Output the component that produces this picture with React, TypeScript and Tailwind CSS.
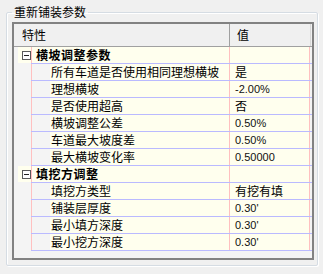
import React from "react";

type Row =
  | { kind: "group"; label: string }
  | { kind: "item"; label: string; value: string; latin?: boolean };

const rows: Row[] = [
  { kind: "group", label: "横坡调整参数" },
  { kind: "item", label: "所有车道是否使用相同理想横坡", value: "是" },
  { kind: "item", label: "理想横坡", value: "-2.00%", latin: true },
  { kind: "item", label: "是否使用超高", value: "否" },
  { kind: "item", label: "横坡调整公差", value: "0.50%", latin: true },
  { kind: "item", label: "车道最大坡度差", value: "0.50%", latin: true },
  { kind: "item", label: "最大横坡变化率", value: "0.50000", latin: true },
  { kind: "group", label: "填挖方调整" },
  { kind: "item", label: "填挖方类型", value: "有挖有填" },
  { kind: "item", label: "铺装层厚度", value: "0.30'", latin: true },
  { kind: "item", label: "最小填方深度", value: "0.30'", latin: true },
  { kind: "item", label: "最小挖方深度", value: "0.30'", latin: true },
];

const cjk = "font-['Noto_Sans_CJK_SC',sans-serif]";

function MinusBox() {
  return (
    <div className="w-[9px] h-[9px] border border-[#5a5a5a] bg-white flex items-center justify-center">
      <div className="w-[5px] h-px bg-[#222]" />
    </div>
  );
}

function GridRow({ row }: { row: Row }) {
  const isGroup = row.kind === "group";
  return (
    <div className="flex h-[17px]">
      <div className="w-[17px] h-[16px] flex">
        {isGroup && (
          <div className="ml-[4px] w-[13px] bg-[#ffffee] flex items-center pl-[4px]">
            <MinusBox />
          </div>
        )}
      </div>
      <div className="flex-1 flex border-b border-[#babaff]">
        <div className="w-px bg-[#ffc0c0]" />
        {isGroup ? (
          <div className="w-[197px] bg-[#ffffee] flex items-center pl-[4px]">
            <span className={`${cjk} text-[12px] leading-none font-bold text-black tracking-[0.5px]`}>
              {row.label}
            </span>
          </div>
        ) : (
          <>
            <div className="w-[18px]" />
            <div className="w-[179px] bg-[#ffffee] flex items-center pl-[1px]">
              <span className={`${cjk} text-[12px] leading-none text-black whitespace-nowrap`}>
                {row.label}
              </span>
            </div>
          </>
        )}
        <div className="w-px bg-[#ffc0c0]" />
        <div className="w-[79px] bg-[#ffffee] flex items-center pl-[5px]">
          {row.kind === "item" && (
            <span
              className={
                row.latin
                  ? "font-['Liberation_Sans',sans-serif] text-[11px] leading-none text-[#111]"
                  : `${cjk} text-[12px] leading-none text-black`
              }
            >
              {row.value}
            </span>
          )}
        </div>
        <div className="w-px bg-[#ffc0c0]" />
      </div>
    </div>
  );
}

export default function App() {
  return (
    <div className="w-[323px] h-[274px] bg-[#f0f0f0] pt-[4px] pl-[6px] overflow-hidden">
      <fieldset className="w-[312px] h-[262px] border border-[#d5dce3] shadow-[inset_1px_1px_0_#fff,1px_1px_0_#fff] rounded-[2px]">
        <legend className={`${cjk} ml-[5px] px-[2px] text-[12px] leading-[16px] text-black`}>
          重新铺装参数
        </legend>
        <div className="ml-[5px] mt-[2px] w-[302px] h-[238px] border-2 border-[#828282] bg-[#f4f4f4] flex flex-col">
          <div className="flex h-[23px] bg-[#f0f0f0] border-b border-[#a0a0a0]">
            <div className="w-[215px] flex items-center pl-[8px]">
              <span className={`${cjk} text-[12px] leading-none text-black`}>特性</span>
            </div>
            <div className="w-px bg-[#a0a0a0]" />
            <div className="w-[80px] flex items-center pl-[7px]">
              <span className={`${cjk} text-[12px] leading-none text-black`}>值</span>
            </div>
            <div className="w-px bg-[#d8d8d8]" />
          </div>
          {rows.map((r, i) => (
            <GridRow key={i} row={r} />
          ))}
        </div>
      </fieldset>
    </div>
  );
}
